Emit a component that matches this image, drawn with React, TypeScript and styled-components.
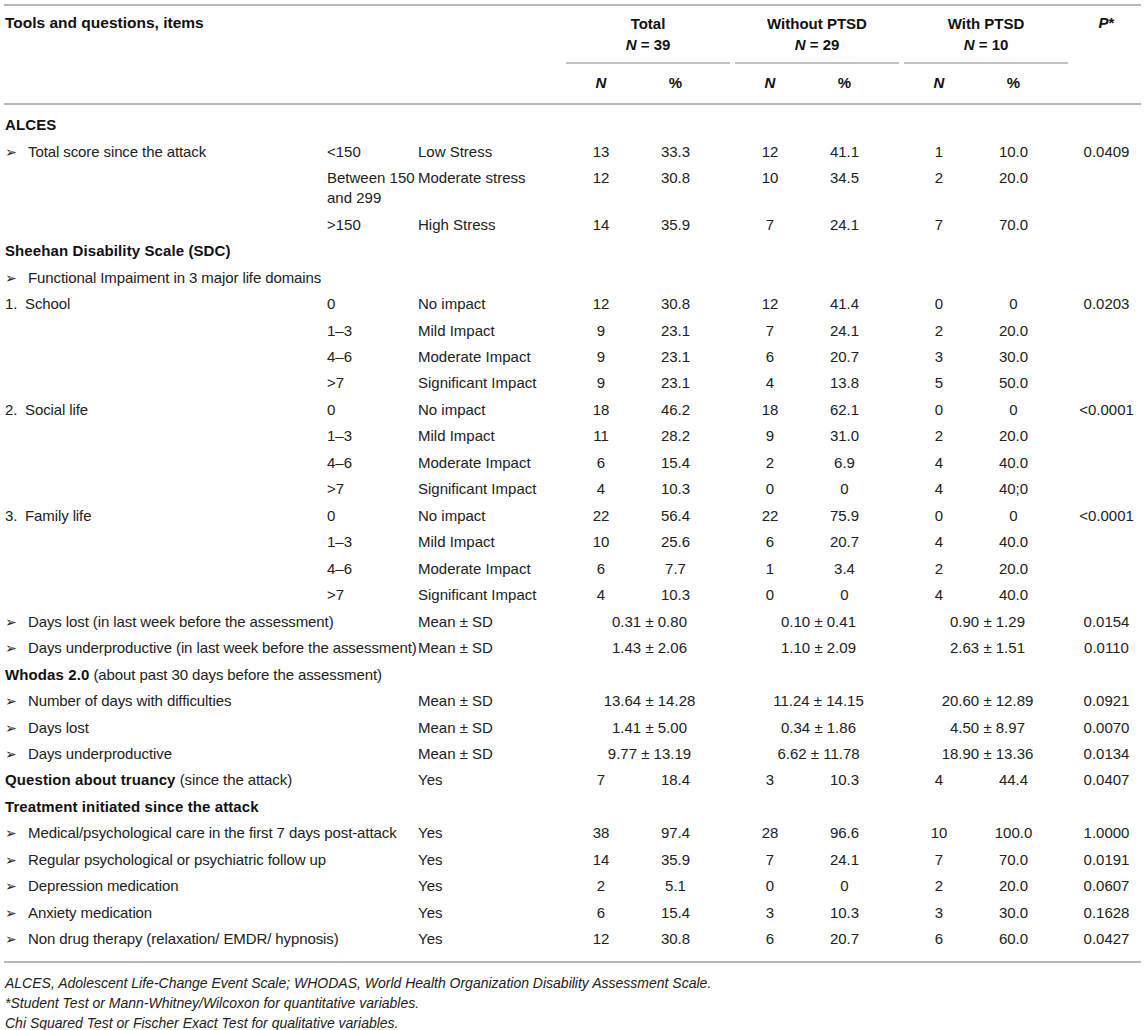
import React from "react";
import styled, { createGlobalStyle } from "styled-components";

const COLS =
  "322px 91px 148px 72px 77px 20px 72px 77px 20px 72px 77px 20px 69px";

const GlobalStyle = createGlobalStyle`
  html, body { margin: 0; padding: 0; background: #ffffff; }
`;

const Page = styled.div`
  width: 1137px;
  padding: 4px 5px 0 4px;
  font-family: "Liberation Sans", Arial, Helvetica, sans-serif;
  font-size: 15px;
  color: #222222;
`;

const Head = styled.div`
  display: grid;
  grid-template-columns: ${COLS};
  border-top: 2px solid #b8b8b8;
  border-bottom: 2px solid #b8b8b8;
  line-height: 21px;
  font-weight: 700;
  color: #111111;
`;

const HeadTitle = styled.div`
  grid-column: 1 / span 3;
  grid-row: 1 / span 2;
  padding: 6px 0 0 1px;
  font-size: 15.5px;
`;

const GroupHead = styled.div<{ $col: number }>`
  grid-column: ${(p) => p.$col} / span 3;
  grid-row: 1;
  text-align: center;
  padding: 6.5px 0 7.5px;
  margin: 0 4px 0 1px;
  border-bottom: 2px solid #c2c2c2;
`;

const SubHead = styled.div<{ $col: number }>`
  grid-column: ${(p) => p.$col};
  grid-row: 2;
  text-align: center;
  padding: 8px 0 10px;
`;

const PHead = styled.div`
  grid-column: 13;
  grid-row: 1 / span 2;
  text-align: center;
  padding-top: 6px;
`;

const Ital = styled.i`
  font-style: italic;
`;

const Body = styled.div`
  padding: 7px 0 8.5px;
  border-bottom: 2px solid #b8b8b8;
`;

const Row = styled.div`
  display: grid;
  grid-template-columns: ${COLS};
  line-height: 20px;
`;

const Cell = styled.div<{ $col: number; $span?: number; $center?: boolean; $nowrap?: boolean }>`
  grid-column: ${(p) => p.$col} / span ${(p) => p.$span ?? 1};
  padding: 3.24px 0 3.24px ${(p) => (p.$center ? "0" : "1px")};
  text-align: ${(p) => (p.$center ? "center" : "left")};
  white-space: ${(p) => (p.$nowrap ? "nowrap" : "normal")};
`;

const LabelCell = styled(Cell)`
  letter-spacing: -0.1px;
`;

const Title = styled.span`
  font-weight: 700;
  color: #111111;
  letter-spacing: 0.1px;
`;

const Arrow = styled.span`
  display: inline-block;
  width: 23px;
  height: 20px;
  line-height: 20px;
  vertical-align: top;
  overflow: hidden;
  font-family: "DejaVu Sans", sans-serif;
  font-size: 14px;
  color: #2a2a2a;
`;

const Num = styled.span`
  display: inline-block;
  width: 20px;
`;

const Footer = styled.div`
  padding: 9.5px 0 0 1px;
  font-style: italic;
  font-size: 14px;
  line-height: 20px;
  color: #222222;
`;

type Marker = "arrow" | string | undefined;

interface DataRow {
  label?: React.ReactNode;
  marker?: Marker;
  span?: number;
  value?: string;
  desc?: string;
  cells?: string[];
  means?: string[];
  p?: string;
}

const rows: DataRow[] = [
  { label: <Title>ALCES</Title>, span: 3 },
  { label: "Total score since the attack", marker: "arrow", value: "<150", desc: "Low Stress", cells: ["13", "33.3", "12", "41.1", "1", "10.0"], p: "0.0409" },
  { value: "Between 150 and 299", desc: "Moderate stress", cells: ["12", "30.8", "10", "34.5", "2", "20.0"] },
  { value: ">150", desc: "High Stress", cells: ["14", "35.9", "7", "24.1", "7", "70.0"] },
  { label: <Title>Sheehan Disability Scale (SDC)</Title>, span: 3 },
  { label: "Functional Impaiment in 3 major life domains", marker: "arrow", span: 3 },
  { label: "School", marker: "1.", value: "0", desc: "No impact", cells: ["12", "30.8", "12", "41.4", "0", "0"], p: "0.0203" },
  { value: "1–3", desc: "Mild Impact", cells: ["9", "23.1", "7", "24.1", "2", "20.0"] },
  { value: "4–6", desc: "Moderate Impact", cells: ["9", "23.1", "6", "20.7", "3", "30.0"] },
  { value: ">7", desc: "Significant Impact", cells: ["9", "23.1", "4", "13.8", "5", "50.0"] },
  { label: "Social life", marker: "2.", value: "0", desc: "No impact", cells: ["18", "46.2", "18", "62.1", "0", "0"], p: "<0.0001" },
  { value: "1–3", desc: "Mild Impact", cells: ["11", "28.2", "9", "31.0", "2", "20.0"] },
  { value: "4–6", desc: "Moderate Impact", cells: ["6", "15.4", "2", "6.9", "4", "40.0"] },
  { value: ">7", desc: "Significant Impact", cells: ["4", "10.3", "0", "0", "4", "40;0"] },
  { label: "Family life", marker: "3.", value: "0", desc: "No impact", cells: ["22", "56.4", "22", "75.9", "0", "0"], p: "<0.0001" },
  { value: "1–3", desc: "Mild Impact", cells: ["10", "25.6", "6", "20.7", "4", "40.0"] },
  { value: "4–6", desc: "Moderate Impact", cells: ["6", "7.7", "1", "3.4", "2", "20.0"] },
  { value: ">7", desc: "Significant Impact", cells: ["4", "10.3", "0", "0", "4", "40.0"] },
  { label: "Days lost (in last week before the assessment)", marker: "arrow", span: 2, desc: "Mean ± SD", means: ["0.31 ± 0.80", "0.10 ± 0.41", "0.90 ± 1.29"], p: "0.0154" },
  { label: "Days underproductive (in last week before the assessment)", marker: "arrow", span: 2, desc: "Mean ± SD", means: ["1.43 ± 2.06", "1.10 ± 2.09", "2.63 ± 1.51"], p: "0.0110" },
  { label: <><Title>Whodas 2.0</Title> (about past 30 days before the assessment)</>, span: 3 },
  { label: "Number of days with difficulties", marker: "arrow", span: 2, desc: "Mean ± SD", means: ["13.64 ± 14.28", "11.24 ± 14.15", "20.60 ± 12.89"], p: "0.0921" },
  { label: "Days lost", marker: "arrow", span: 2, desc: "Mean ± SD", means: ["1.41 ± 5.00", "0.34 ± 1.86", "4.50 ± 8.97"], p: "0.0070" },
  { label: "Days underproductive", marker: "arrow", span: 2, desc: "Mean ± SD", means: ["9.77 ± 13.19", "6.62 ± 11.78", "18.90 ± 13.36"], p: "0.0134" },
  { label: <><Title>Question about truancy</Title> (since the attack)</>, span: 2, desc: "Yes", cells: ["7", "18.4", "3", "10.3", "4", "44.4"], p: "0.0407" },
  { label: <Title>Treatment initiated since the attack</Title>, span: 3 },
  { label: "Medical/psychological care in the first 7 days post-attack", marker: "arrow", span: 2, desc: "Yes", cells: ["38", "97.4", "28", "96.6", "10", "100.0"], p: "1.0000" },
  { label: "Regular psychological or psychiatric follow up", marker: "arrow", span: 2, desc: "Yes", cells: ["14", "35.9", "7", "24.1", "7", "70.0"], p: "0.0191" },
  { label: "Depression medication", marker: "arrow", span: 2, desc: "Yes", cells: ["2", "5.1", "0", "0", "2", "20.0"], p: "0.0607" },
  { label: "Anxiety medication", marker: "arrow", span: 2, desc: "Yes", cells: ["6", "15.4", "3", "10.3", "3", "30.0"], p: "0.1628" },
  { label: "Non drug therapy (relaxation/ EMDR/ hypnosis)", marker: "arrow", span: 2, desc: "Yes", cells: ["12", "30.8", "6", "20.7", "6", "60.0"], p: "0.0427" },
];

const CELL_COLS = [4, 5, 7, 8, 10, 11];
const MEAN_COLS = [4, 7, 10];

function TableRow({ row }: { row: DataRow }) {
  const span = row.span ?? 1;
  return (
    <Row>
      <LabelCell $col={1} $span={span} $nowrap>
        {row.marker === "arrow" && <Arrow>➢</Arrow>}
        {row.marker && row.marker !== "arrow" && <Num>{row.marker}</Num>}
        {row.label ?? "\u00a0"}
      </LabelCell>
      {span < 2 && <Cell $col={2}>{row.value}</Cell>}
      {span < 3 && <Cell $col={3} $nowrap>{row.desc}</Cell>}
      {row.cells?.map((c, i) => (
        <Cell key={i} $col={CELL_COLS[i]} $center>
          {c}
        </Cell>
      ))}
      {row.means?.map((m, i) => (
        <Cell key={i} $col={MEAN_COLS[i]} $span={3} $center $nowrap>
          {m}
        </Cell>
      ))}
      {row.p && (
        <Cell $col={13} $center $nowrap>
          {row.p}
        </Cell>
      )}
    </Row>
  );
}

const groups = [
  { name: "Total", n: "39", col: 4 },
  { name: "Without PTSD", n: "29", col: 7 },
  { name: "With PTSD", n: "10", col: 10 },
];

export default function App() {
  return (
    <>
      <GlobalStyle />
      <Page>
        <Head>
          <HeadTitle>Tools and questions, items</HeadTitle>
          {groups.map((g) => (
            <GroupHead key={g.col} $col={g.col}>
              {g.name}
              <br />
              <Ital>N</Ital> = {g.n}
            </GroupHead>
          ))}
          {groups.map((g) => (
            <React.Fragment key={g.col}>
              <SubHead $col={g.col}>
                <Ital>N</Ital>
              </SubHead>
              <SubHead $col={g.col + 1}>%</SubHead>
            </React.Fragment>
          ))}
          <PHead>
            <Ital>P</Ital>*
          </PHead>
        </Head>
        <Body>
          {rows.map((r, i) => (
            <TableRow key={i} row={r} />
          ))}
        </Body>
        <Footer>
          ALCES, Adolescent Life-Change Event Scale; WHODAS, World Health Organization Disability Assessment Scale.
          <br />
          *Student Test or Mann-Whitney/Wilcoxon for quantitative variables.
          <br />
          Chi Squared Test or Fischer Exact Test for qualitative variables.
        </Footer>
      </Page>
    </>
  );
}
